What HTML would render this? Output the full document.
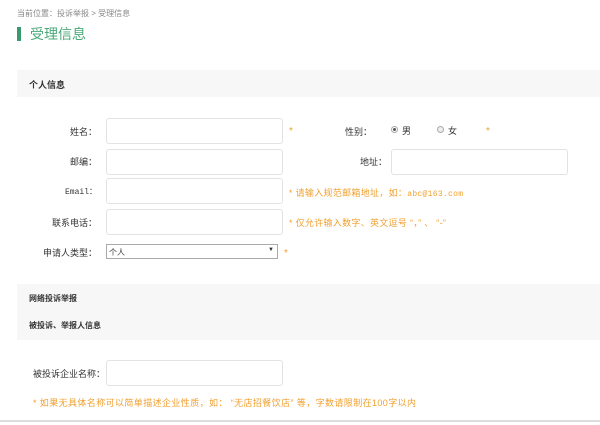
<!DOCTYPE html>
<html><head><meta charset="utf-8"><style>
*{margin:0;padding:0;box-sizing:border-box}
body{width:600px;height:425px;background:#fff;position:relative;overflow:hidden;font-family:"Liberation Sans","Noto Sans CJK SC",sans-serif;color:#333}
.a{position:absolute;white-space:nowrap}
.inp{position:absolute;border:1px solid #e3e3e3;border-radius:3px;background:#fff}
.lbl{position:absolute;font-size:9px;color:#333;text-align:right;width:90px;left:7px}
.star{position:absolute;color:#f0a030;font-size:10px}
.hint{position:absolute;color:#f0a030;font-size:9px;white-space:nowrap}
.grey{position:absolute;left:17px;right:0;background:#f7f7f7}
.radio{position:absolute;width:7px;height:7px;border:1px solid #aaa;border-radius:50%;background:#eee}
</style></head><body>
<div class="a" style="left:17px;top:8px;font-size:8px;color:#888">当前位置：投诉举报 &gt; 受理信息</div>
<div class="a" style="left:17px;top:27px;width:4px;height:14px;background:#3a9a6e"></div>
<div class="a" style="left:30px;top:24px;font-size:14px;color:#4aa878">受理信息</div>

<div class="grey" style="top:70px;height:27px"></div>
<div class="a" style="left:29px;top:78px;font-size:9px;font-weight:bold;color:#333">个人信息</div>

<div class="lbl" style="top:125px">姓名：</div>
<div class="inp" style="left:106px;top:118px;width:177px;height:26px"></div>
<div class="star" style="left:289px;top:126px">*</div>
<div class="a" style="left:345px;top:125px;font-size:9px">性别：</div>
<div class="radio" style="left:391px;top:126px;background:#fff"><div style="width:3px;height:3px;background:#555;border-radius:50%;margin:1px"></div></div>
<div class="a" style="left:402px;top:124px;font-size:9px">男</div>
<div class="radio" style="left:437px;top:126px"></div>
<div class="a" style="left:448px;top:124px;font-size:9px">女</div>
<div class="star" style="left:486px;top:126px">*</div>

<div class="lbl" style="top:155px">邮编：</div>
<div class="inp" style="left:106px;top:149px;width:177px;height:26px"></div>
<div class="a" style="left:360px;top:155px;font-size:9px">地址：</div>
<div class="inp" style="left:391px;top:149px;width:177px;height:26px"></div>

<div class="lbl" style="top:186px;font-family:'Liberation Mono',monospace;font-size:8px">Email：</div>
<div class="inp" style="left:106px;top:178px;width:177px;height:26px"></div>
<div class="hint" style="left:289px;top:186px;letter-spacing:0.3px">* 请输入规范邮箱地址，如：<span style="font-family:'Liberation Mono',monospace;font-size:8px">abc@163.com</span></div>

<div class="lbl" style="top:216px">联系电话：</div>
<div class="inp" style="left:106px;top:209px;width:177px;height:26px"></div>
<div class="hint" style="left:289px;top:216px;letter-spacing:0.3px">* 仅允许输入数字、英文逗号 “，” 、 “-”</div>

<div class="lbl" style="top:246px">申请人类型：</div>
<div class="a" style="left:106px;top:244px;width:172px;height:15px;border:1px solid #aaa;background:#fff;font-size:8px;padding:2px 2px">个人<span style="position:absolute;right:3px;top:2px;font-size:6px">▼</span></div>
<div class="star" style="left:284px;top:248px">*</div>

<div class="grey" style="top:284px;height:56px"></div>
<div class="a" style="left:29px;top:293px;font-size:8px;font-weight:bold">网络投诉举报</div>
<div class="a" style="left:29px;top:320px;font-size:8px;font-weight:bold">被投诉、举报人信息</div>

<div class="a" style="left:33px;top:367px;font-size:9px">被投诉企业名称：</div>
<div class="inp" style="left:106px;top:360px;width:177px;height:26px"></div>
<div class="hint" style="left:33px;top:396px;letter-spacing:0.4px">* 如果无具体名称可以简单描述企业性质，如： “无店招餐饮店” 等，字数请限制在100字以内</div>
<div class="a" style="left:0;top:420px;width:600px;height:2px;background:#ddd"></div>
</body></html>
